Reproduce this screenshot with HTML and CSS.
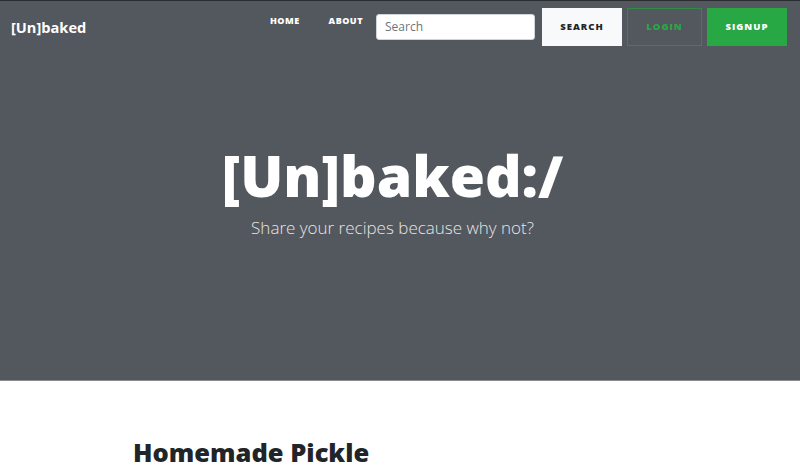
FILE: index.html
```html
<!DOCTYPE html>
<html lang="en">
<head>
<meta charset="utf-8">
<title>[Un]baked</title>
<link rel="stylesheet" href="styles.css">
</head>
<body>
<header class="hero">
  <nav class="navbar">
    <a class="brand" href="#">[Un]baked</a>
    <div class="nav-right">
      <ul class="nav-links">
        <li><a href="#">HOME</a></li>
        <li><a href="#">ABOUT</a></li>
      </ul>
      <form class="search-form">
        <input class="search-input" type="text" placeholder="Search">
        <button class="btn btn-light" type="button">SEARCH</button>
      </form>
      <button class="btn btn-outline" type="button">LOGIN</button>
      <button class="btn btn-success" type="button">SIGNUP</button>
    </div>
  </nav>
  <div class="hero-body">
    <h1 class="hero-title">[Un]baked:/</h1>
    <p class="hero-lead">Share your recipes because why not?</p>
  </div>
</header>
<main class="content">
  <h2 class="recipe-title">Homemade Pickle</h2>
</main>
</body>
</html>
```
FILE: styles.css
```css
* { box-sizing: border-box; }
html, body { margin: 0; padding: 0; }
body {
  font-family: "Open Sans", "Noto Sans", sans-serif;
  background: #fff;
  color: #212529;
  overflow: hidden;
}
.hero {
  background: #53575e;
  border-top: 1px solid #2a2c30;
  border-bottom: 1px solid #8a8c90;
  height: 381px;
}
.navbar {
  display: flex;
  align-items: center;
  justify-content: space-between;
  height: 51px;
  padding: 0 13px 0 11px;
}
.brand {
  color: #fff;
  font-weight: 700;
  font-size: 14.6px;
  text-decoration: none;
}
.nav-right {
  display: flex;
  align-items: center;
  gap: 5px;
}
.nav-links {
  display: flex;
  list-style: none;
  margin: 0 8px 18px 0;
  padding: 0;
  gap: 29px;
}
.nav-links a {
  color: #fff;
  font-weight: 800;
  font-size: 9px;
  letter-spacing: 0.5px;
  text-decoration: none;
}
.search-form {
  display: flex;
  align-items: center;
  gap: 7px;
}
.search-input {
  width: 159px;
  height: 26px;
  border: 1px solid #ced4da;
  border-radius: 3px;
  padding: 0 8px;
  font-family: inherit;
  font-size: 12px;
  color: #495057;
}
.search-input::placeholder { color: #6c757d; }
.btn {
  height: 38px;
  padding: 0 12px;
  font-family: inherit;
  font-weight: 800;
  font-size: 9.5px;
  letter-spacing: 1px;
  border: 1px solid transparent;
  border-radius: 0;
  cursor: pointer;
}
.btn-light { background: #f8f9fa; color: #212529; border-color: #f8f9fa; width: 80px; }
.btn-outline { background: transparent; color: #28a745; border-color: #2f8a45; width: 75px; }
.btn-success { background: #28a745; color: #fff; border-color: #28a745; width: 80px; }
.hero-body {
  text-align: center;
  padding: 89px 15px 0 0;
}
.hero-title {
  margin: 0;
  color: #fff;
  font-weight: 800;
  font-size: 57px;
  line-height: 1.2;
}
.hero-lead {
  margin: 7px 0 0;
  color: #e6e6e6;
  font-weight: 300;
  font-size: 17px;
}
.content {
  padding: 0 0 0 133px;
}
.recipe-title {
  margin: 56px 0 0;
  font-weight: 800;
  font-size: 25.5px;
  line-height: 1.2;
  color: #212529;
}
```
